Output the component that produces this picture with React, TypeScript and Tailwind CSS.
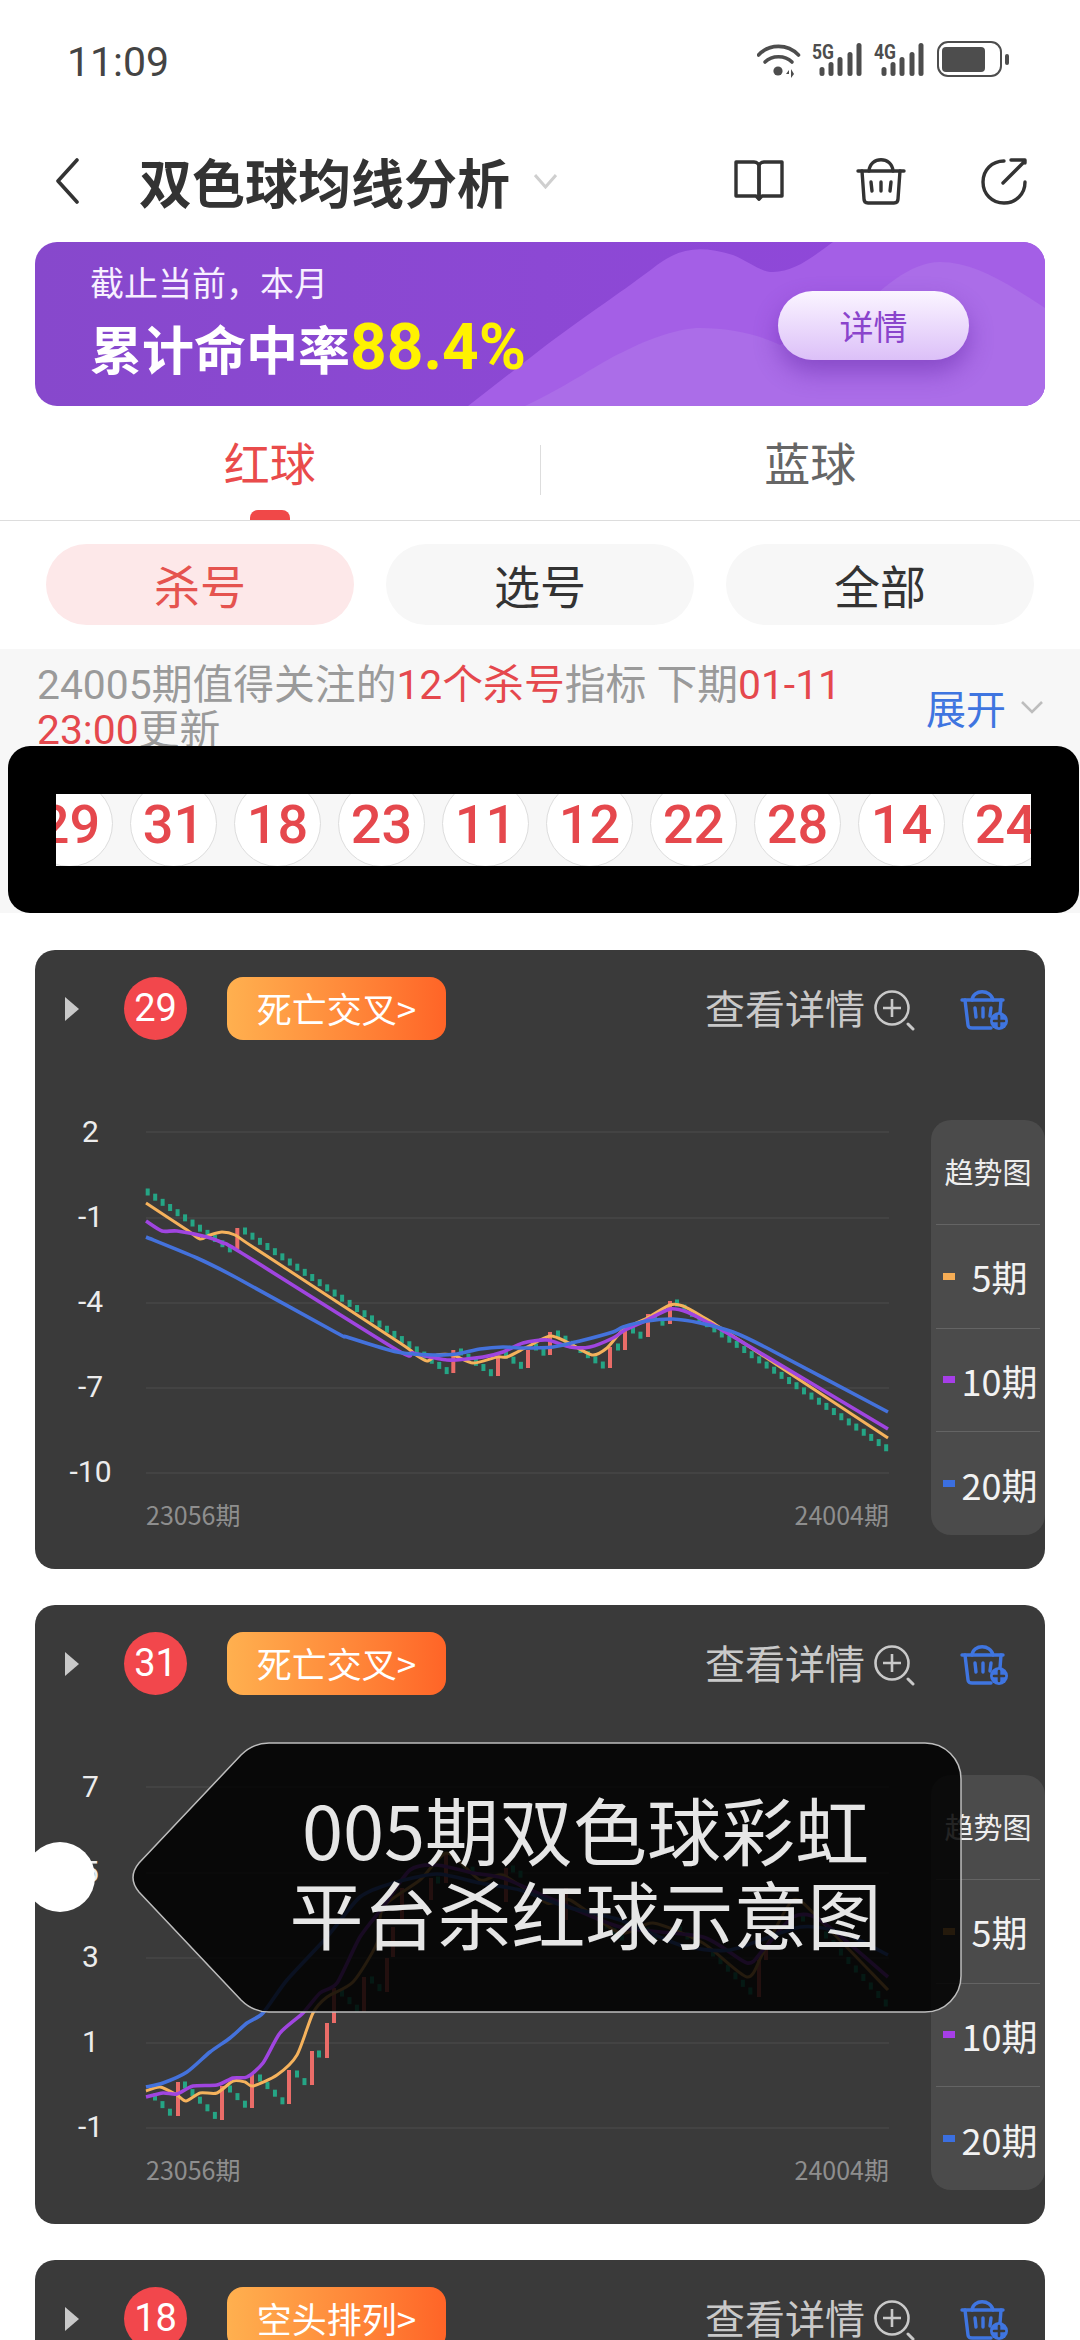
import { ReactNode } from "react";

type Pt = [number, number];

const FONT = { fontFamily: '"Noto Sans CJK SC", sans-serif' };
const LATIN = '"Roboto", "Noto Sans CJK SC", sans-serif';

const smooth = (pts: Pt[]) => {
  let d = `M${pts[0][0]} ${pts[0][1]}`;
  for (let i = 0; i < pts.length - 1; i++) {
    const p0 = pts[Math.max(i - 1, 0)];
    const p1 = pts[i];
    const p2 = pts[i + 1];
    const p3 = pts[Math.min(i + 2, pts.length - 1)];
    const k = 0.12;
    d += `C${p1[0] + (p2[0] - p0[0]) * k} ${p1[1] + (p2[1] - p0[1]) * k} ${p2[0] - (p3[0] - p1[0]) * k} ${p2[1] - (p3[1] - p1[1]) * k} ${p2[0]} ${p2[1]}`;
  }
  return d;
};

const run = (x: number, y: number, n: number, dy = 5.17): Pt[] =>
  Array.from({ length: n }, (_, i) => [x + i * 7.47, y + i * dy] as Pt);

interface ChartData {
  top: number;
  grid: number[];
  orange: Pt[];
  purple: Pt[];
  blue: Pt[];
  green: Pt[];
  red: [number, number, number][];
}

const chart1: ChartData = {
  top: 1120,
  grid: [1132, 1218, 1303, 1388, 1473],
  orange: [[146, 1203], [187, 1230], [200, 1239], [210, 1235], [222, 1232], [235, 1235], [253, 1247], [400, 1343], [413, 1353], [427, 1361], [437, 1355], [453, 1355], [473, 1363], [497, 1357], [507, 1357], [527, 1347], [550, 1336], [567, 1342], [592, 1355], [607, 1348], [623, 1330], [647, 1318], [670, 1305], [683, 1306], [703, 1317], [727, 1332], [888, 1438]],
  purple: [[146, 1221], [162, 1231], [177, 1231], [207, 1237], [223, 1243], [240, 1252], [397, 1350], [413, 1353], [447, 1360], [483, 1357], [503, 1352], [523, 1343], [547, 1340], [570, 1347], [590, 1347], [613, 1338], [625, 1330], [647, 1320], [670, 1309], [687, 1312], [707, 1322], [727, 1333], [888, 1429]],
  blue: [[146, 1237], [197, 1258], [237, 1278], [337, 1333], [347, 1337], [397, 1352], [433, 1355], [457, 1354], [480, 1349], [503, 1347], [523, 1348], [553, 1347], [580, 1341], [613, 1332], [623, 1327], [647, 1321], [673, 1319], [700, 1323], [733, 1332], [767, 1348], [888, 1412]],
  green: [
    ...run(147.7, 1192, 12),
    ...run(245, 1231, 28),
    ...run(461, 1352, 5),
    ...run(506, 1355, 3),
    ...run(536, 1347, 2),
    ...run(558, 1334, 7),
    [618, 1347],
    ...run(633, 1330, 2),
    ...run(655, 1317, 2),
    ...run(677, 1303, 29),
  ],
  red: [[237.3, 1228, 1249], [453.3, 1350, 1373], [498, 1356, 1376], [528, 1350, 1368], [550, 1332, 1355], [610, 1347, 1368], [625, 1330, 1350], [648, 1314, 1337], [670, 1301, 1324]],
};

const chart2: ChartData = {
  top: 1775,
  grid: [1787, 1873, 1958, 2043, 2128],
  orange: [[146, 2091], [160, 2087], [177, 2095], [186, 2101], [200, 2093], [217, 2093], [233, 2081], [245, 2082], [253, 2086], [277, 2075], [297, 2055], [313, 2013], [327, 1997], [353, 1982], [377, 1943], [383, 1907], [420, 1880], [447, 1853], [480, 1880], [503, 1875], [547, 1903], [570, 1900], [620, 1933], [653, 1923], [703, 1943], [747, 1977], [763, 1953], [793, 1900], [820, 1920], [888, 1990]],
  purple: [[146, 2097], [163, 2093], [177, 2094], [193, 2086], [217, 2085], [233, 2078], [247, 2077], [263, 2063], [280, 2033], [303, 2013], [320, 1993], [337, 1983], [360, 1937], [383, 1907], [410, 1870], [437, 1865], [473, 1873], [503, 1878], [547, 1897], [620, 1927], [703, 1937], [747, 1963], [763, 1950], [793, 1917], [820, 1920], [888, 1977]],
  blue: [[146, 2087], [163, 2083], [187, 2072], [210, 2052], [230, 2038], [247, 2023], [263, 2013], [287, 1980], [327, 1937], [360, 1897], [393, 1883], [437, 1874], [480, 1883], [520, 1890], [567, 1907], [620, 1920], [680, 1945], [730, 1950], [800, 1927], [843, 1933], [888, 1955]],
  green: [
    ...run(155, 2097, 3, 7.6),
    ...run(185, 2085, 5, 7.6),
    ...run(230, 2089, 3, 7.6),
    ...run(260, 2078, 4, 7.6),
    ...run(297, 2074, 2, 7.6),
    [319, 2054],
    ...run(342, 1993, 3, 7.6),
    ...run(372, 1980, 2, 7.6),
    [438, 1880],
    ...run(465, 1865, 2),
    ...run(513, 1869, 2),
    ...run(607, 1925, 3, 6),
    ...run(640, 1925, 3, 6),
    ...run(680, 1930, 3, 6),
    ...run(713, 1953, 6, 7.6),
    [803, 1918],
    ...run(826, 1935, 9, 8.5),
  ],
  red: [[178, 2082, 2116], [222, 2086, 2120], [252, 2074, 2108], [289, 2070, 2104], [312, 2051, 2085], [327, 2023, 2058], [334, 1988, 2023], [364, 1977, 2012], [387, 1958, 1992], [393, 1927, 1957], [402, 1888, 1920], [431, 1878, 1900], [446, 1853, 1883], [506, 1868, 1902], [566, 1888, 1920], [759, 1960, 1997], [766, 1947, 1960]],
};

const Chart = ({ data }: { data: ChartData }) => (
  <svg
    width={743}
    height={380}
    viewBox={`146 ${data.top} 743 380`}
    className="block overflow-visible"
  >
    {data.grid.map((y) => (
      <line key={y} x1={146} x2={889} y1={y} y2={y} stroke="#474747" strokeWidth={1.5} />
    ))}
    {data.green.map(([x, y], i) => (
      <rect key={i} x={x - 2} y={y - 3.5} width={4} height={7} fill="#25a585" />
    ))}
    {data.red.map(([x, y1, y2], i) => (
      <rect key={i} x={x - 2} y={y1} width={4} height={y2 - y1} fill="#ea6c68" />
    ))}
    <path d={smooth(data.orange)} fill="none" stroke="#f5b25c" strokeWidth={3} />
    <path d={smooth(data.purple)} fill="none" stroke="#a045e0" strokeWidth={3.6} />
    <path d={smooth(data.blue)} fill="none" stroke="#4472dc" strokeWidth={3.6} />
  </svg>
);

const Legend = () => (
  <div className="w-[114px] h-[415px] ml-[42px] bg-[#4b4b4b] rounded-[20px] flex flex-col shrink-0">
    <div className="h-[104px] flex items-center justify-center text-[29px] text-[#eeeeee]">
      趋势图
    </div>
    {[
      ["5期", "bg-[#f6ad55]"],
      ["10期", "bg-[#a63ee8]"],
      ["20期", "bg-[#3b6fe0]"],
    ].map(([label, color]) => (
      <div
        key={label}
        className="h-[104px] mx-[5px] pl-[7px] border-t border-[#646464] flex items-center"
      >
        <div className={`w-[12px] h-[7px] shrink-0 ${color}`} />
        <div className="flex-1 pl-[4px] text-center text-[36px] text-[#f2f2f2] whitespace-nowrap">
          {label}
        </div>
      </div>
    ))}
  </div>
);

const MagnifierPlus = () => (
  <svg width={41} height={41} viewBox="0 0 41 41" fill="none" stroke="#c9c9c9" strokeWidth={2.6}>
    <circle cx={18} cy={18} r={16.5} />
    <path d="M18 9v18M9 18h18" />
    <path d="M34 34l5 5" strokeLinecap="round" strokeWidth={3} />
  </svg>
);

const BasketPlus = () => (
  <svg width={50} height={42} viewBox="0 0 50 42" fill="none" stroke="#3f75e0" strokeWidth={3.4} strokeLinecap="round" strokeLinejoin="round">
    <path d="M2 11h41" />
    <path d="M12 11c1-11 19-11 21 0" />
    <path d="M5 11l3 25c0 2 2 3 4 3h19" />
    <path d="M41 11l-1 13" />
    <path d="M15 19l1 9M23 19v9M31 19l-1 8" />
    <circle cx={39} cy={32} r={9} fill="#3f75e0" stroke="none" />
    <path d="M39 27v10M34 32h10" stroke="#3a3a3a" strokeWidth={2.6} />
  </svg>
);

interface CardProps {
  ball: string;
  tag: string;
  data?: ChartData;
  yLabels?: string[];
  children?: ReactNode;
}

const Card = ({ ball, tag, data, yLabels, children }: CardProps) => (
  <div className="relative mx-[35px] h-[619px] bg-[#3a3a3a] rounded-[20px] shrink-0">
    <div className="pt-[27px] pl-[30px] pr-[35px] flex items-center h-[90px]">
      <svg width={14} height={24} viewBox="0 0 14 24" className="shrink-0">
        <path d="M0 0l14 12L0 24z" fill="#c9c9c9" />
      </svg>
      <div
        className="ml-[45px] w-[63px] h-[63px] rounded-full bg-[#f2474c] text-white text-[38px] flex items-center justify-center"
        style={{ fontFamily: LATIN }}
      >
        {ball}
      </div>
      <div className="ml-[40px] w-[219px] h-[63px] rounded-[16px] bg-gradient-to-r from-[#ffb04f] to-[#ff6427] text-white text-[35px] flex items-center justify-center whitespace-nowrap">
        {tag}
      </div>
      <div className="ml-auto mb-[4px] text-[40px] text-[#c9c9c9] whitespace-nowrap">查看详情</div>
      <div className="ml-[9px] mt-[3px]">
        <MagnifierPlus />
      </div>
      <div className="ml-[45px] mt-[2px]">
        <BasketPlus />
      </div>
    </div>
    {data && yLabels && (
      <div className="mt-[80px] flex items-start">
        <div
          className="w-[111px] h-[364px] flex flex-col justify-between items-center text-[30px] leading-[24px] text-[#ececec] shrink-0"
          style={{ fontFamily: LATIN }}
        >
          {yLabels.map((v) => (
            <div key={v}>{v}</div>
          ))}
        </div>
        <div className="w-[743px] shrink-0">
          <Chart data={data} />
          <div className="h-[30px] flex items-center justify-between text-[25px] text-[#8e8e8e]">
            <span>23056期</span>
            <span>24004期</span>
          </div>
        </div>
        <Legend />
      </div>
    )}
    {children}
  </div>
);

const StatusIcons = () => (
  <svg width={254} height={38} viewBox="757 42 254 38" className="block">
    <g fill="none" stroke="#4d4d4d" strokeWidth={3.6} strokeLinecap="round">
      <path d="M758.5 56c11-11.500 29-11.500 40 0" />
      <path d="M765 63c7-7 20-7 27 0" />
    </g>
    <circle cx={778} cy={72} r={4.6} fill="#4d4d4d" />
    <path d="M789 71l-3 4h3zM791 70v9l3-4z" fill="#4d4d4d" />
    {[0, 62].map((dx) => (
      <g key={dx} fill="#4d4d4d">
        {[[822, 68], [831, 63], [840, 58], [850, 53], [859, 44]].map(([x, y]) => (
          <rect key={x} x={x - 2.5 + dx} y={y} width={5} height={77 - y} rx={2.5} />
        ))}
        <text
          x={812 + dx}
          y={60}
          fontSize={21}
          fontWeight={700}
          fontFamily="Roboto, sans-serif"
          textLength={22}
          lengthAdjust="spacingAndGlyphs"
        >
          {dx ? "4G" : "5G"}
        </text>
      </g>
    ))}
    <rect x={938} y={43} width={63} height={34} rx={10} fill="none" stroke="#4d4d4d" strokeWidth={2} />
    <rect x={942} y={48} width={43} height={25} rx={4} fill="#4d4d4d" />
    <rect x={1005} y={55} width={4} height={11} rx={2} fill="#4d4d4d" />
  </svg>
);

const Book = () => (
  <svg width={50} height={42} viewBox="0 0 50 42" fill="none" stroke="#333333" strokeWidth={3.4} strokeLinejoin="round">
    <path d="M2 2h18c3 0 5 2 5 5v32l-3-3H2z" />
    <path d="M48 2H30c-3 0-5 2-5 5v32l3-3h20z" />
  </svg>
);

const Basket = () => (
  <svg width={50} height={48} viewBox="0 0 50 48" fill="none" stroke="#333333" strokeWidth={3.4} strokeLinecap="round" strokeLinejoin="round">
    <path d="M2 14h46" />
    <path d="M13 14c1-15 23-15 24 0" />
    <path d="M6 14l2 28c0 3 2 4 4 4h26c2 0 4-1 4-4l2-28" />
    <path d="M15 25l1 9M25 25v9M35 25l-1 9" />
  </svg>
);

const Share = () => (
  <svg width={48} height={48} viewBox="0 0 48 48" fill="none" stroke="#333333" strokeWidth={3.4} strokeLinecap="round" strokeLinejoin="round">
    <path d="M24 4C12 4 3 13 3 25s9 21 21 21 21-9 21-21" />
    <path d="M23 26L45 4M31 3h14v3" />
  </svg>
);

const balls = ["29", "31", "18", "23", "11", "12", "22", "28", "14", "24"];

const App = () => {
  return (
    <div className="w-[1080px] h-[2340px] overflow-hidden bg-white flex flex-col" style={FONT}>
      <div className="h-[120px] flex items-center justify-between pl-[67px] pr-[69px] shrink-0">
        <span className="mt-[6px] text-[41px] text-[#444444]" style={{ fontFamily: LATIN }}>
          11:09
        </span>
        <StatusIcons />
      </div>

      <div className="h-[122px] flex items-center pl-[55px] pr-[52px] shrink-0">
        <svg width={24} height={46} viewBox="0 0 24 46" fill="none" stroke="#333333" strokeWidth={3.6} strokeLinecap="round" strokeLinejoin="round">
          <path d="M22 2L3 23l19 21" />
        </svg>
        <span className="ml-[60px] text-[53px] leading-none font-bold text-[#333333] whitespace-nowrap">
          双色球均线分析
        </span>
        <svg width={23} height={15} viewBox="0 0 23 15" fill="none" stroke="#cfcfcf" strokeWidth={3} className="ml-[24px]">
          <path d="M1 1l10.500 12L22 1" />
        </svg>
        <div className="ml-auto flex items-center">
          <Book />
          <div className="ml-[72px]">
            <Basket />
          </div>
          <div className="ml-[74px]">
            <Share />
          </div>
        </div>
      </div>

      <div className="relative mx-[35px] h-[164px] rounded-[22px] overflow-hidden bg-gradient-to-r from-[#8748cc] to-[#9148dc] shrink-0">
        <svg width={1010} height={164} viewBox="35 242 1010 164" className="absolute inset-0">
          <path d="M468 406L540 350C590 312 625 290 657 265C680 248 700 245 733 255C750 262 760 272 773 272C795 272 815 255 833 242H1045V406Z" fill="#a45fe6" />
          <path d="M525 406C570 385 600 362 623 352C650 338 680 328 700 328C730 328 760 335 780 345L860 310C880 290 910 262 940 262C975 262 1010 285 1045 308V406Z" fill="#ab6de8" />
        </svg>
        <div className="relative h-full flex items-start justify-between pl-[55px] pr-[76px]">
          <div className="pt-[20px]">
            <div className="text-[34px] leading-[40px] text-[#f7f0ff] whitespace-nowrap">
              {"截止当前\uFF0C本月"}
            </div>
            <div className="mt-[16px] h-[60px] flex items-center text-[52px] font-bold text-white whitespace-nowrap">
              累计命中率
              <span className="text-[64px] text-[#fff200]" style={{ fontFamily: LATIN }}>
                88.4%
              </span>
            </div>
          </div>
          <div className="mt-[49px] w-[191px] h-[69px] rounded-full bg-gradient-to-b from-[#fbf5ff] to-[#dcc0f8] shadow-[0_12px_24px_rgba(90,30,160,0.45)] text-[34px] text-[#8a44cc] flex items-center justify-center">
            详情
          </div>
        </div>
      </div>

      <div className="h-[115px] flex items-start border-b border-[#dddddd] shrink-0">
        <div className="flex-1 flex flex-col items-center pt-[25px]">
          <div className="text-[46px] leading-[60px] text-[#e94b4b]">红球</div>
          <div className="mt-[19px] w-[40px] h-[10px] rounded-t-[8px] bg-[#f04848]" />
        </div>
        <div className="w-px h-[50px] mt-[39px] bg-[#dddddd]" />
        <div className="flex-1 flex flex-col items-center pt-[25px]">
          <div className="text-[46px] leading-[60px] text-[#666666]">蓝球</div>
        </div>
      </div>

      <div className="px-[46px] pt-[23px] pb-[24px] flex gap-[32px] shrink-0">
        <div className="w-[308px] h-[81px] rounded-full bg-[#fde8e9] text-[46px] text-[#e5534f] flex items-center justify-center">
          杀号
        </div>
        <div className="w-[308px] h-[81px] rounded-full bg-[#f7f7f7] text-[46px] text-[#333333] flex items-center justify-center">
          选号
        </div>
        <div className="w-[308px] h-[81px] rounded-full bg-[#f7f7f7] text-[46px] text-[#333333] flex items-center justify-center">
          全部
        </div>
      </div>

      <div className="bg-[#f7f7f7] shrink-0">
        <div className="h-[97px] pl-[37px] flex items-start">
          <div className="w-[815px] pt-[14px] text-[40.8px] leading-[45px] text-[#9a9a9a] shrink-0" style={{ fontFamily: LATIN }}>
            24005期值得关注的<span className="text-[#e5484d]">12个杀号</span>指标 下期<span className="text-[#e5484d]">01-11 23:00</span>更新
          </div>
          <div className="ml-[74px] mt-[36px] text-[40px] leading-[45px] text-[#3f75e0] whitespace-nowrap">
            展开
          </div>
          <svg width={22} height={13} viewBox="0 0 22 13" fill="none" stroke="#bdbdbd" strokeWidth={2.6} className="ml-[15px] mt-[52px]">
            <path d="M1 1l10 10L21 1" />
          </svg>
        </div>
        <div className="relative ml-[8px] w-[1071px] h-[167px] bg-black rounded-[22px] flex items-center justify-center">
          <div className="w-[975px] h-[72px] bg-[#f7f7f7] overflow-hidden">
            <div className="flex gap-[17px] ml-[-30px] mt-[-14px]">
              {balls.map((b) => (
                <div
                  key={b}
                  className="w-[87px] h-[87px] pt-[3px] rounded-full bg-white border border-[#dddddd] text-[54px] font-medium text-[#e5484d] flex items-center justify-center shrink-0"
                  style={{ fontFamily: LATIN }}
                >
                  {b}
                </div>
              ))}
            </div>
          </div>
        </div>
      </div>

      <div className="mt-[37px] flex flex-col gap-[36px]">
        <Card ball="29" tag="死亡交叉>" data={chart1} yLabels={["2", "-1", "-4", "-7", "-10"]} />
        <Card ball="31" tag="死亡交叉>" data={chart2} yLabels={["7", "5", "3", "1", "-1"]}>
          <div className="absolute left-[-10px] top-[237px] w-[70px] h-[70px] rounded-full bg-white" />
          <div className="absolute left-[96px] top-[137px] w-[831px] h-[271px] flex items-center justify-center pl-[78px]">
            <svg width={831} height={271} viewBox="0 0 831 271" className="absolute inset-0">
              <path
                d="M138 1H794A36 36 0 0 1 830 37V234A36 36 0 0 1 794 270H138Q122 270 110 258L8 150Q-4 135.500 8 121L110 13Q122 1 138 1Z"
                fill="rgba(0,0,0,0.85)"
                stroke="#bdbdbd"
                strokeWidth={1.5}
              />
            </svg>
            <div className="relative text-[74px] leading-[84px] text-[#e6e6e6] text-center whitespace-nowrap mt-[-15px]">
              <div>005期双色球彩虹</div>
              <div>平台杀红球示意图</div>
            </div>
          </div>
        </Card>
        <Card ball="18" tag="空头排列>" />
      </div>
    </div>
  );
};

export default App;
